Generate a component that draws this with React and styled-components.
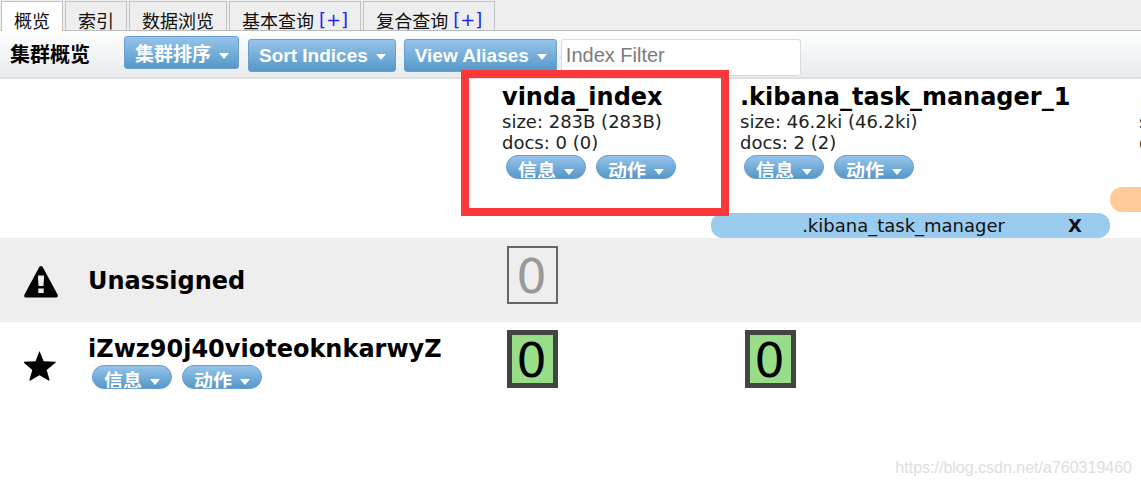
import React from "react";
import styled, { createGlobalStyle } from "styled-components";

const Global = createGlobalStyle`
  * { box-sizing: border-box; }
  body {
    margin: 0;
    background: #fff;
    color: #000;
    font-family: Verdana, "DejaVu Sans", "Noto Sans CJK SC", sans-serif;
    font-size: 18px;
  }
  button, input { font-family: inherit; margin: 0; }
`;

const Page = styled.div`
  display: flex;
  flex-direction: column;
  min-height: 100vh;
`;

const Tabs = styled.nav`
  display: flex;
  gap: 2px;
  height: 31px;
  padding: 1px 1px 0;
  background: #eee;
  border-bottom: 1px solid #bbb;
`;

const Tab = styled.div`
  display: flex;
  align-items: flex-start;
  gap: 5px;
  height: ${(p) => (p.$active ? 30 : 29)}px;
  padding: 7px 12px 0;
  border: 1px solid #c4c4c4;
  border-bottom: 0;
  background: ${(p) => (p.$active ? "#fff" : "#eee")};
  white-space: nowrap;
`;

const TabButton = styled.button`
  padding: 0;
  border: 0;
  background: none;
  color: #111;
  font-family: "Noto Sans CJK SC", sans-serif;
  font-size: 18px;
  line-height: 22px;
`;

const AddLink = styled.a`
  color: #22f;
  font-size: 18px;
  line-height: 22px;
  text-decoration: none;
`;

const Toolbar = styled.header`
  display: flex;
  align-items: flex-start;
  gap: 9px;
  height: 48px;
  padding: 5px 10px 0;
  border-bottom: 2px solid #dfe0e3;
  background: linear-gradient(#fdfefe, #e9ebee);
`;

const Title = styled.h1`
  width: 105px;
  margin: 0;
  font-size: 20px;
  line-height: 38px;
  font-weight: bold;
`;

const Filters = styled.div`
  display: flex;
  gap: 8px;
  padding-top: 3px;
`;

const MenuButton = styled.button`
  display: flex;
  align-items: center;
  gap: 8px;
  height: 33px;
  padding: ${(p) => (p.$lowText ? 4 : 0)}px 9px 0 10px;
  border: 1px solid #6a9fd4;
  border-radius: 3px;
  background: linear-gradient(#96c4ea, #5598c8);
  color: #fff;
  font-family: "Liberation Sans", "Noto Sans CJK SC", sans-serif;
  font-size: 19px;
  line-height: 28px;
  font-weight: bold;
  white-space: nowrap;
`;

const Pill = styled(MenuButton)`
  align-items: flex-start;
  width: 80px;
  height: 24px;
  padding: 2px 10px 0 11px;
  border-radius: 12px;
  overflow: hidden;
`;

const Caret = styled.span`
  flex: none;
  border: 5px solid transparent;
  border-top: 6px solid #fff;
  border-bottom: 0;
  margin-top: ${(p) => (p.$low ? 11 : 2)}px;
`;

const FilterInput = styled.input`
  width: 240px;
  height: 37px;
  margin-left: -4px;
  padding: 0 4px 5px;
  border: 1px solid #d8dadc;
  border-radius: 3px;
  background: #fff;
  font-family: "Liberation Sans", sans-serif;
  font-size: 20px;
  &::placeholder { color: #7c7c7c; opacity: 1; }
`;

const Grid = styled.table`
  width: 100%;
  table-layout: fixed;
  border-collapse: collapse;
`;

const Col = styled.col`
  width: ${(p) => p.$w}px;
`;

const IndexHead = styled.th`
  position: relative;
  height: 159px;
  padding: 0;
  overflow: ${(p) => (p.$clip ? "hidden" : "visible")};
  vertical-align: top;
  text-align: left;
  font-weight: normal;
  white-space: nowrap;
`;

const HeadStack = styled.div`
  display: flex;
  flex-direction: column;
  justify-content: space-between;
  height: 159px;
`;

const IndexInfo = styled.div`
  padding: 5px 0 0 29px;
`;

const Name = styled.h2`
  margin: 0;
  font-size: 24px;
  line-height: 27px;
  font-weight: bold;
`;

const Stat = styled.div`
  color: #222;
  font-size: 18px;
  line-height: 21px;
`;

const Pills = styled.div`
  display: flex;
  gap: 10px;
  padding: 2px 4px 0;
`;

const Aliases = styled.div`
  height: 51px;
  display: flex;
  flex-direction: column;
  justify-content: ${(p) => (p.$top ? "flex-start" : "flex-end")};
`;

const Alias = styled.div`
  display: flex;
  align-items: center;
  min-width: 200px;
  height: 25px;
  padding: 0 28px;
  border-radius: 12px;
  background: ${(p) => p.$color};
  color: #111;
  font-size: 18px;
  line-height: 25px;
`;

const AliasName = styled.span`
  flex: 1;
  text-align: center;
`;

const AliasClose = styled.button`
  padding: 0;
  border: 0;
  background: none;
  color: #111;
  font-size: 18px;
  font-weight: bold;
`;

const Highlight = styled.div`
  position: absolute;
  z-index: 1;
  top: -9px;
  left: -12px;
  width: 268px;
  height: 146px;
  border: 8px solid #fd3838;
  pointer-events: none;
`;

const Row = styled.tr`
  height: 84px;
  background: ${(p) => (p.$shaded ? "#eee" : "#fff")};
`;

const IconCell = styled.td`
  padding: 4px 0 0 24px;
  vertical-align: middle;
  svg { display: block; }
`;

const NodeCell = styled.th`
  padding: ${(p) => (p.$actions ? "0 0 4px" : "2px 0 0")};
  text-align: left;
  vertical-align: middle;
`;

const ShardCell = styled.td`
  padding: 8px 0 0 34px;
  vertical-align: top;
`;

const Shard = styled.div`
  display: flex;
  align-items: center;
  justify-content: center;
  width: 51px;
  height: 58px;
  padding: 2px 2px 0 0;
  border: ${(p) => (p.$assigned ? "5px solid #444" : "2px solid #666")};
  background: ${(p) => (p.$assigned ? "#9d8" : "#eee")};
  color: ${(p) => (p.$assigned ? "#000" : "#999")};
  font-size: 48px;
  line-height: 46px;
`;

const Watermark = styled.footer`
  margin-top: auto;
  padding: 0 9px 8px;
  color: #dedede;
  font-family: "Liberation Sans", sans-serif;
  font-size: 16px;
  line-height: 20px;
  text-align: right;
`;

const tabs = [
  { label: "概览", active: true },
  { label: "索引" },
  { label: "数据浏览" },
  { label: "基本查询", add: true },
  { label: "复合查询", add: true },
];

function Actions() {
  return (
    <Pills>
      <Pill type="button">信息<Caret $low /></Pill>
      <Pill type="button">动作<Caret $low /></Pill>
    </Pills>
  );
}

function IndexColumn({ name, size, docs, actions, highlighted, clip, children }) {
  return (
    <IndexHead scope="col" $clip={clip}>
      <HeadStack>
        <IndexInfo>
          <Name>{name}</Name>
          <Stat>size: {size}</Stat>
          <Stat>docs: {docs}</Stat>
          {actions && <Actions />}
        </IndexInfo>
        {children}
      </HeadStack>
      {highlighted && <Highlight />}
    </IndexHead>
  );
}

export default function App() {
  return (
    <Page>
      <Global />
      <Tabs>
        {tabs.map((t) => (
          <Tab key={t.label} $active={t.active}>
            <TabButton type="button">{t.label}</TabButton>
            {t.add && <AddLink href="#new">[+]</AddLink>}
          </Tab>
        ))}
      </Tabs>
      <Toolbar>
        <Title>集群概览</Title>
        <MenuButton type="button" $lowText>集群排序<Caret /></MenuButton>
        <Filters>
          <MenuButton type="button">Sort Indices<Caret /></MenuButton>
          <MenuButton type="button">View Aliases<Caret /></MenuButton>
          <FilterInput type="text" placeholder="Index Filter" aria-label="Index Filter" />
        </Filters>
      </Toolbar>
      <Grid>
        <colgroup>
          <Col $w={88} />
          <Col $w={385} />
          <Col $w={238} />
          <Col $w={399} />
          <col />
        </colgroup>
        <thead>
          <tr>
            <td colSpan={2} />
            <IndexColumn name="vinda_index" size="283B (283B)" docs="0 (0)" actions highlighted />
            <IndexColumn name=".kibana_task_manager_1" size="46.2ki (46.2ki)" docs="2 (2)" actions>
              <Aliases>
                <Alias $color="#9ce">
                  <AliasName>.kibana_task_manager</AliasName>
                  <AliasClose type="button">X</AliasClose>
                </Alias>
              </Aliases>
            </IndexColumn>
            <IndexColumn name="." clip>
              <Aliases $top>
                <Alias $color="#fc9" />
              </Aliases>
            </IndexColumn>
          </tr>
        </thead>
        <tbody>
          <Row $shaded>
            <IconCell>
              <svg width="34" height="32" viewBox="0 0 34 32" aria-hidden="true">
                <path fillRule="evenodd" d="M17 0q1.200 0 2 1.500L33.500 28.500q1 3-1.500 3H2q-2.500 0-1.500-3L15 1.500Q15.800 0 17 0zM14 9.500v3l.6 7.500h4.800l.6-7.500v-3zM14.300 22.500v4.500h5.400v-4.500z" />
              </svg>
            </IconCell>
            <NodeCell scope="row"><Name>Unassigned</Name></NodeCell>
            <ShardCell><Shard>0</Shard></ShardCell>
            <ShardCell />
            <ShardCell />
          </Row>
          <Row>
            <IconCell>
              <svg width="32" height="30" viewBox="0 0 32 30" aria-hidden="true">
                <path d="M15.500 0L19.700 10.300L31.500 10.700Q32 11.200 31.200 12L22.700 18.900L25.600 29Q25.500 30 24.600 29.600L15.500 24.300L6.400 29.600Q5.500 30 5.400 29L8.300 18.900L.2 12Q-.5 11.200 .2 10.700L11.500 10.300z" />
              </svg>
            </IconCell>
            <NodeCell scope="row" $actions>
              <Name>iZwz90j40vioteoknkarwyZ</Name>
              <Actions />
            </NodeCell>
            <ShardCell><Shard $assigned>0</Shard></ShardCell>
            <ShardCell><Shard $assigned>0</Shard></ShardCell>
            <ShardCell />
          </Row>
        </tbody>
      </Grid>
      <Watermark>https://blog.csdn.net/a760319460</Watermark>
    </Page>
  );
}
